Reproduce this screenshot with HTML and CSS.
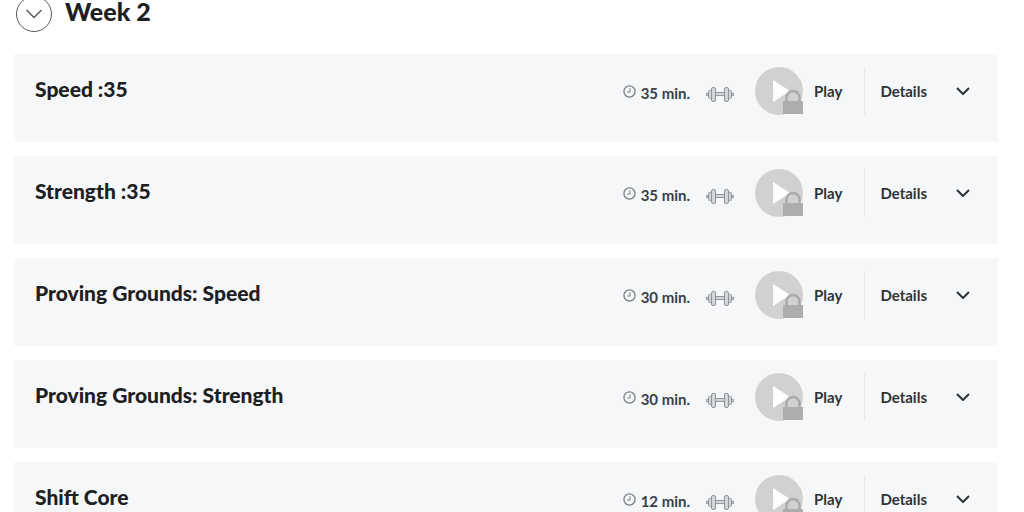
FILE: index.html
```html
<!DOCTYPE html>
<html lang="en">
  <head>
    <meta charset="UTF-8" />
    <title>Week 2</title>
    <link rel="stylesheet" href="styles.css">
  </head>
  <body>
    <!-- Shared icons -->
    <svg class="sprite" aria-hidden="true">
      <symbol id="icon-clock" viewBox="0 0 14 14">
        <circle cx="7" cy="7" r="6" fill="none" stroke="#7c7f82" stroke-width="1.4" />
        <path d="M7.5 3.5v4H4.5" fill="none" stroke="#7c7f82" stroke-width="1.1" />
      </symbol>
      <symbol id="icon-weights" viewBox="0 0 28 16">
        <g fill="#d4d6d8" stroke="#929598" stroke-width="1">
          <path d="M.5 7.5h2v2h-2zM25.500 7.500h2v2h-2z" />
          <rect x="2.500" y="4.500" width="3" height="8" rx="1" />
          <rect x="22.500" y="4.500" width="3" height="8" rx="1" />
          <rect x="9.500" y="6.500" width="9" height="3" />
          <rect x="5.500" y="1.500" width="4" height="14" rx="1.500" />
          <rect x="18.500" y="1.500" width="4" height="14" rx="1.500" />
        </g>
      </symbol>
      <symbol id="icon-play-locked" viewBox="0 0 48 48">
        <circle cx="24" cy="24" r="24" fill="#d0d1d2" />
        <path d="M18 13v22l17-11z" fill="#fff" />
        <path d="M31.500 36v-5.500a6.500 6.500 0 0 1 13 0V36" fill="none" stroke="#a9abad" stroke-width="2.500" />
        <rect x="28" y="34" width="20" height="13" fill="#abadaf" />
      </symbol>
      <symbol id="icon-chevron" viewBox="0 0 14 8">
        <path d="M1 1l6 6 6-6" fill="none" stroke="currentColor" stroke-width="2" />
      </symbol>
    </svg>

    <main class="week">
      <header class="week-header">
        <button class="week-toggle" aria-label="Collapse week">
          <svg width="18" height="10" viewBox="0 0 18 10"><path d="M1.500 1L9 8.500 16.500 1" fill="none" stroke="#55585b" stroke-width="1.400" /></svg>
        </button>
        <h2 class="week-title">Week 2</h2>
      </header>

      <ul class="workouts">
        <li class="workout">
          <h3 class="workout-title">Speed :35</h3>
          <span class="duration"><svg class="clock"><use href="#icon-clock" /></svg>35 min.</span>
          <svg class="weights"><use href="#icon-weights" /></svg>
          <button class="play"><svg class="play-icon"><use href="#icon-play-locked" /></svg>Play</button>
          <button class="details">Details<svg class="chevron"><use href="#icon-chevron" /></svg></button>
        </li>
        <li class="workout">
          <h3 class="workout-title">Strength :35</h3>
          <span class="duration"><svg class="clock"><use href="#icon-clock" /></svg>35 min.</span>
          <svg class="weights"><use href="#icon-weights" /></svg>
          <button class="play"><svg class="play-icon"><use href="#icon-play-locked" /></svg>Play</button>
          <button class="details">Details<svg class="chevron"><use href="#icon-chevron" /></svg></button>
        </li>
        <li class="workout">
          <h3 class="workout-title">Proving Grounds: Speed</h3>
          <span class="duration"><svg class="clock"><use href="#icon-clock" /></svg>30 min.</span>
          <svg class="weights"><use href="#icon-weights" /></svg>
          <button class="play"><svg class="play-icon"><use href="#icon-play-locked" /></svg>Play</button>
          <button class="details">Details<svg class="chevron"><use href="#icon-chevron" /></svg></button>
        </li>
        <li class="workout">
          <h3 class="workout-title">Proving Grounds: Strength</h3>
          <span class="duration"><svg class="clock"><use href="#icon-clock" /></svg>30 min.</span>
          <svg class="weights"><use href="#icon-weights" /></svg>
          <button class="play"><svg class="play-icon"><use href="#icon-play-locked" /></svg>Play</button>
          <button class="details">Details<svg class="chevron"><use href="#icon-chevron" /></svg></button>
        </li>
        <li class="workout">
          <h3 class="workout-title">Shift Core</h3>
          <span class="duration"><svg class="clock"><use href="#icon-clock" /></svg>12 min.</span>
          <svg class="weights"><use href="#icon-weights" /></svg>
          <button class="play"><svg class="play-icon"><use href="#icon-play-locked" /></svg>Play</button>
          <button class="details">Details<svg class="chevron"><use href="#icon-chevron" /></svg></button>
        </li>
      </ul>
    </main>
  </body>
</html>
```

FILE: styles.css
```css
html {
  overflow: hidden;
}
body {
  margin: 0;
  background-color: #fff;
  color: #1d2023;
  font-family: Lato, sans-serif;
}
button {
  padding: 0;
  border: none;
  background: none;
  color: #303336;
  font: inherit;
  cursor: pointer;
}
h2,
h3 {
  margin: 0;
}
.sprite {
  position: absolute;
  width: 0;
  height: 0;
}
.week {
  margin-top: -4px;
  padding: 0 26px 0 14px;
}
.week-header {
  display: flex;
  align-items: center;
  gap: 13px;
  padding: 0 2px;
}
.week-toggle {
  display: flex;
  align-items: center;
  justify-content: center;
  width: 36px;
  height: 36px;
  border: 1px solid #55585b;
  border-radius: 50%;
}
.week-title {
  padding-bottom: 6px;
  font-size: 25px;
  font-weight: 900;
  line-height: 28px;
}
.workouts {
  display: grid;
  gap: 14px;
  margin: 22px 0 0;
  padding: 0;
  list-style: none;
}
.workout {
  display: flex;
  align-items: center;
  padding: 13px 28px 27px 21px;
  background-color: #f5f7f9;
  font-size: 15px;
  font-weight: 700;
}
.workout-title {
  flex: 1;
  padding-bottom: 4px;
  font-size: 21px;
  font-weight: 900;
  line-height: 26px;
}
.duration {
  display: flex;
  align-items: center;
  gap: 5px;
  padding-top: 4px;
  color: #3c3f42;
}
.clock {
  width: 13px;
  height: 13px;
  margin-bottom: 4px;
}
.weights {
  width: 28px;
  height: 16px;
  margin: 6px 21px 0 16px;
}
.play {
  display: flex;
  align-items: center;
  gap: 11px;
}
.play-icon {
  width: 48px;
  height: 48px;
}
.details {
  display: flex;
  align-items: center;
  gap: 29px;
  height: 48px;
  margin-left: 22px;
  padding-left: 15px;
  border-left: 1px solid #e6e8ea;
}
.chevron {
  width: 14px;
  height: 8px;
}
```
